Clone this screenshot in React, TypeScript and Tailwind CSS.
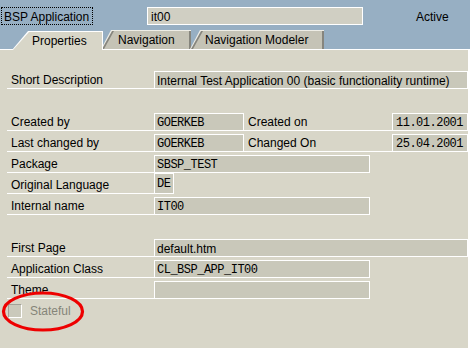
import React from "react";

const mono = "font-['Liberation_Mono','DejaVu_Sans_Mono',monospace] text-[12px] tracking-[-0.5px]";

function Field({ text, className, mono: isMono }: { text?: string; className: string; mono?: boolean }) {
  return (
    <div
      className={`border border-white bg-[#c9c8ba] flex items-center pl-[2px] pt-[1px] whitespace-nowrap overflow-hidden ${isMono ? mono : ""} ${className}`}
    >
      {text}
    </div>
  );
}

function Label({ text, className = "w-[147px] ml-[7px]" }: { text: string; className?: string }) {
  return (
    <div className={`h-[21px] border-b border-white flex items-center pl-[4px] pt-[3px] whitespace-nowrap ${className}`}>
      {text}
    </div>
  );
}

function Row({ children }: { children?: React.ReactNode }) {
  return <div className="flex items-end h-[21px]">{children}</div>;
}

export default function App() {
  return (
    <div className="relative w-[470px] h-[348px] overflow-hidden bg-white text-[12px] text-black font-['Liberation_Sans',Arial,sans-serif]">
      {/* header */}
      <div className="h-[49px] bg-[#97afc3] pt-[7px] flex flex-col">
        <div className="flex items-center h-[18px]">
          <div className="ml-[1px] w-[92px] h-[18px] border border-dotted border-black flex items-center pl-[2px] pt-[1px]">
            BSP Application
          </div>
          <div className="ml-[54px] w-[216px] h-[18px] border border-white bg-[#d0cfc3] flex items-center pl-[3px] pt-[1px]">
            it00
          </div>
          <div className="ml-[53px] pt-[1px]">Active</div>
        </div>

        <div className="mt-[5px] h-[19px] flex">
          {/* active tab */}
          <div className="relative z-10 ml-[12px] mt-[1px] w-[91px] h-[19px]">
            <div className="absolute inset-0 bg-white [clip-path:polygon(16px_0,100%_0,100%_100%,0_100%)]" />
            <div className="absolute top-[1px] left-[1px] right-[1px] bottom-0 bg-[#d8d6c8] [clip-path:polygon(16px_0,100%_0,100%_100%,0_100%)]" />
            <div className="relative h-full flex items-center pl-[20px]">Properties</div>
          </div>

          <div className="relative ml-[-2px] w-[90px] h-[19px]">
            <div className="absolute inset-0 bg-[#eeede6] [clip-path:polygon(10px_0,100%_0,100%_100%,0_100%)]" />
            <div className="absolute top-[1px] left-[1px] right-0 bottom-0 bg-[#86857d] [clip-path:polygon(10px_0,100%_0,100%_100%,0_100%)]" />
            <div className="absolute top-[1px] left-[3px] right-[2px] bottom-0 bg-[#c5c3b6] [clip-path:polygon(10px_0,100%_0,100%_100%,0_100%)]" />
            <div className="relative h-full flex items-center pl-[17px] pt-[1px]">Navigation</div>
          </div>

          <div className="relative ml-[-1px] w-[134px] h-[19px]">
            <div className="absolute inset-0 bg-[#eeede6] [clip-path:polygon(10px_0,100%_0,100%_100%,0_100%)]" />
            <div className="absolute top-[1px] left-[1px] right-0 bottom-0 bg-[#86857d] [clip-path:polygon(10px_0,100%_0,100%_100%,0_100%)]" />
            <div className="absolute top-[1px] left-[3px] right-[2px] bottom-0 bg-[#c5c3b6] [clip-path:polygon(10px_0,100%_0,100%_100%,0_100%)]" />
            <div className="relative h-full flex items-center pl-[15px] pt-[1px]">Navigation Modeler</div>
          </div>
        </div>
      </div>

      {/* panel */}
      <div className="w-[468px] h-[299px] bg-[#d8d6c8] border-t border-white pt-[18px]">
        <Row>
          <Label text="Short Description" />
          <Field text="Internal Test Application 00 (basic functionality runtime)" className="w-[314px] h-[18px]" />
        </Row>
        <Row />
        <Row>
          <Label text="Created by" />
          <Field text="GOERKEB" mono className="w-[90px] h-[18px]" />
          <Label text="Created on" className="w-[148px]" />
          <Field text="11.01.2001" mono className="w-[76px] h-[18px] pl-[3px]" />
        </Row>
        <Row>
          <Label text="Last changed by" />
          <Field text="GOERKEB" mono className="w-[90px] h-[18px]" />
          <Label text="Changed On" className="w-[148px]" />
          <Field text="25.04.2001" mono className="w-[76px] h-[18px] pl-[3px]" />
        </Row>
        <Row>
          <Label text="Package" />
          <Field text="SBSP_TEST" mono className="w-[216px] h-[18px]" />
        </Row>
        <Row>
          <Label text="Original Language" />
          <Field text="DE" mono className="w-[20px] h-[21px]" />
        </Row>
        <Row>
          <Label text="Internal name" />
          <Field text="IT00" mono className="w-[216px] h-[18px]" />
        </Row>
        <Row />
        <Row>
          <Label text="First Page" />
          <Field text="default.htm" className="w-[314px] h-[18px]" />
        </Row>
        <Row>
          <Label text="Application Class" />
          <Field text="CL_BSP_APP_IT00" mono className="w-[216px] h-[18px]" />
        </Row>
        <Row>
          <Label text="Theme" />
          <Field className="w-[216px] h-[18px]" />
        </Row>
        <div className="flex items-center h-[23px]">
          <div className="ml-[8px] w-[14px] h-[14px] bg-[#cac9bb] border border-t-[#a3a298] border-l-[#a3a298] border-r-white border-b-white" />
          <div className="ml-[8px] text-[#858579]">Stateful</div>
        </div>
      </div>

      {/* red highlight */}
      <svg className="absolute left-[1px] top-[291px]" width="84" height="41" viewBox="0 0 84 41">
        <ellipse cx="42" cy="20.5" rx="39.5" ry="18.5" fill="none" stroke="#ee0000" strokeWidth="3.2" />
      </svg>
    </div>
  );
}
